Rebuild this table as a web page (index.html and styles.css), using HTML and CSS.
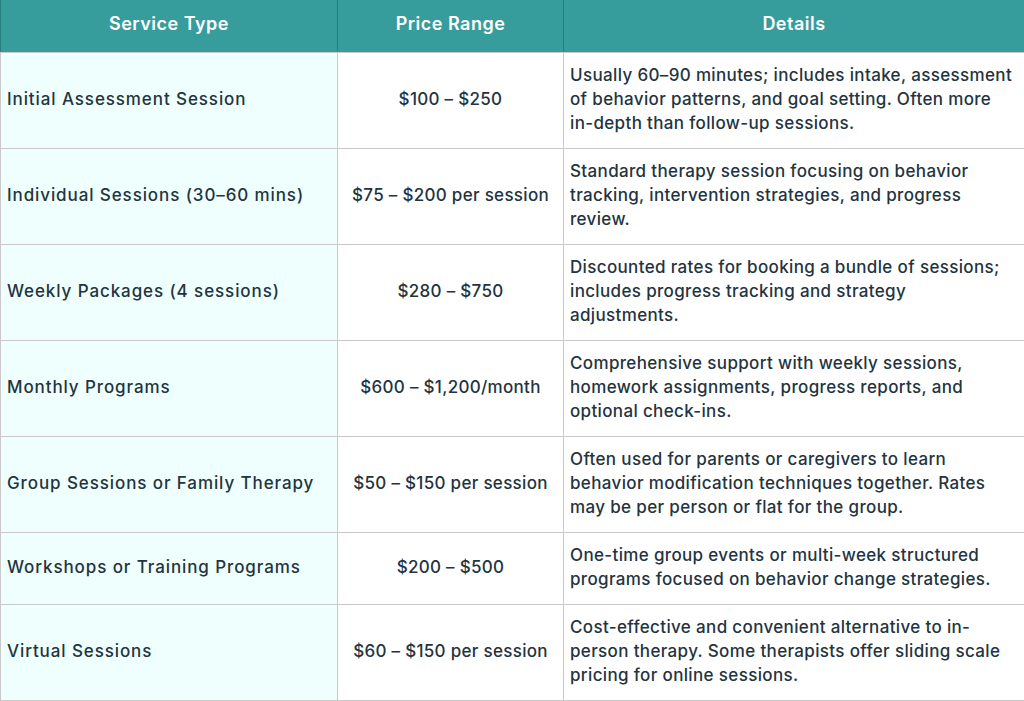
FILE: index.html
```html
<!DOCTYPE html>
<html lang="en">
<head>
<meta charset="utf-8">
<title>Behavior Therapy Pricing</title>
<link rel="stylesheet" href="styles.css">
</head>
<body>
<table class="pricing">
  <colgroup>
    <col class="c-service">
    <col class="c-price">
    <col class="c-details">
  </colgroup>
  <thead>
    <tr>
      <th>Service Type</th>
      <th>Price Range</th>
      <th>Details</th>
    </tr>
  </thead>
  <tbody>
    <tr>
      <td class="service">Initial Assessment Session</td>
      <td class="price">$100 – $250</td>
      <td class="details">Usually 60–90 minutes; includes intake, assessment of behavior patterns, and goal setting. Often more in-depth than follow-up sessions.</td>
    </tr>
    <tr>
      <td class="service">Individual Sessions (30–60 mins)</td>
      <td class="price">$75 – $200 per session</td>
      <td class="details">Standard therapy session focusing on behavior tracking, intervention strategies, and progress review.</td>
    </tr>
    <tr>
      <td class="service">Weekly Packages (4 sessions)</td>
      <td class="price">$280 – $750</td>
      <td class="details">Discounted rates for booking a bundle of sessions; includes progress tracking and strategy adjustments.</td>
    </tr>
    <tr>
      <td class="service">Monthly Programs</td>
      <td class="price">$600 – $1,200/month</td>
      <td class="details">Comprehensive support with weekly sessions, homework assignments, progress reports, and optional check-ins.</td>
    </tr>
    <tr>
      <td class="service">Group Sessions or Family Therapy</td>
      <td class="price">$50 – $150 per session</td>
      <td class="details">Often used for parents or caregivers to learn behavior modification techniques together. Rates may be per person or flat for the group.</td>
    </tr>
    <tr>
      <td class="service">Workshops or Training Programs</td>
      <td class="price">$200 – $500</td>
      <td class="details">One-time group events or multi-week structured programs focused on behavior change strategies.</td>
    </tr>
    <tr>
      <td class="service">Virtual Sessions</td>
      <td class="price">$60 – $150 per session</td>
      <td class="details">Cost-effective and convenient alternative to in-person therapy. Some therapists offer sliding scale pricing for online sessions.</td>
    </tr>
  </tbody>
</table>
</body>
</html>
```

FILE: styles.css
```css
html, body {
  margin: 0;
  padding: 0;
  background: #ffffff;
}

body {
  font-family: "Inter", "Liberation Sans", sans-serif;
  color: #23343f;
}

.pricing {
  width: 1024px;
  border-collapse: collapse;
  table-layout: fixed;
  font-size: 17px;
  font-weight: 500;
  line-height: 24px;
}

.c-service { width: 337px; }
.c-price { width: 226px; }
.c-details { width: 461px; }

.pricing th {
  height: 52px;
  box-sizing: border-box;
  padding: 0 8px 3px;
  background: #369c9c;
  color: #ffffff;
  font-size: 18px;
  font-weight: 600;
  letter-spacing: 0.5px;
  text-align: center;
  border-left: 1px solid #2a7d7d;
  border-right: 1px solid #2a7d7d;
  border-bottom: 1px solid #c9c9c9;
}

.pricing td {
  border: 1px solid #c9c9c9;
  padding: 10px 6px 13px;
  vertical-align: middle;
}

.pricing td.service {
  background: #effffd;
  text-align: left;
  letter-spacing: 0.9px;
}

.pricing td.price {
  text-align: center;
  letter-spacing: 0.3px;
}

.pricing td.details {
  text-align: left;
  letter-spacing: 0.35px;
  padding-right: 5px;
}
```
